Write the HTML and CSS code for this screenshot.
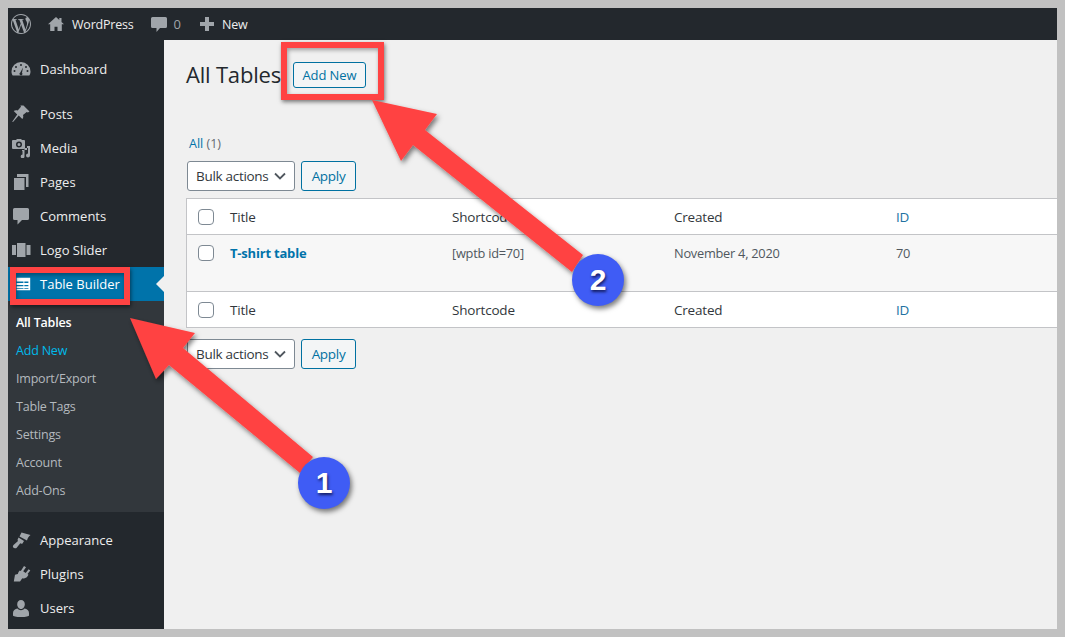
FILE: index.html
```html
<!DOCTYPE html>
<html lang="en">
<head>
<meta charset="utf-8">
<title>All Tables</title>
<link rel="stylesheet" href="styles.css">
</head>
<body>
<div class="frame">
  <header class="adminbar">
    <svg class="wp-logo" viewBox="0 0 24 24"><path fill-rule="evenodd" d="M21.469 6.825c.84 1.537 1.318 3.3 1.318 5.175 0 3.979-2.156 7.456-5.363 9.325l3.295-9.527c.615-1.54.82-2.771.82-3.864 0-.405-.026-.78-.07-1.11m-7.981.105c.647-.03 1.232-.105 1.232-.105.582-.075.514-.93-.067-.899 0 0-1.755.135-2.88.135-1.064 0-2.85-.15-2.85-.15-.585-.03-.661.855-.075.885 0 0 .54.061 1.125.09l1.68 4.605-2.37 7.08L5.354 6.9c.649-.03 1.234-.1 1.234-.1.585-.075.516-.93-.065-.896 0 0-1.746.138-2.874.138-.2 0-.438-.008-.69-.015C4.911 3.15 8.235 1.215 12 1.215c2.809 0 5.365 1.072 7.286 2.833-.046-.003-.091-.009-.141-.009-1.06 0-1.812.923-1.812 1.914 0 .89.513 1.643 1.06 2.531.411.72.89 1.643.89 2.977 0 .915-.354 1.994-.821 3.479l-1.075 3.585-3.9-11.61.001.014zM12 22.784c-1.059 0-2.081-.153-3.048-.437l3.237-9.406 3.315 9.087c.024.053.05.101.078.149-1.12.393-2.325.609-3.582.609M1.211 12c0-1.564.336-3.05.935-4.39L7.29 21.709C3.694 19.96 1.212 16.271 1.211 12M12 0C5.385 0 0 5.385 0 12s5.385 12 12 12 12-5.385 12-12S18.615 0 12 0"/></svg>
    <svg class="bar-icon bar-home" viewBox="0 0 16 16"><path d="M8 1 0 8.2h2.2V15h4.3v-4.2h3V15h4.3V8.2H16l-2.5-2.3V2h-2.2v1.9z"/></svg>
    <span class="bar-text">WordPress</span>
    <svg class="bar-icon bar-comment" viewBox="0 0 16 16"><path d="M1.5 1h13A1.5 1.5 0 0 1 16 2.5v8a1.5 1.5 0 0 1-1.500 1.500H9l-3.500 4V12h-4A1.500 1.500 0 0 1 0 10.500v-8A1.500 1.500 0 0 1 1.500 1z"/></svg>
    <span class="bar-count">0</span>
    <svg class="bar-icon bar-plus" viewBox="0 0 16 16"><path d="M6 1h4v5h5v4h-5v5H6v-5H1V6h5z"/></svg>
    <span class="bar-text bar-new">New</span>
  </header>
  <div class="body-row">
    <nav class="sidebar">
      <ul class="menu">
        <li class="item"><svg class="icon" viewBox="0 0 20 20"><path fill-rule="evenodd" d="M10 3a9.500 9.500 0 0 0-9.500 9.500c0 1.700.5 3 1.200 4h16.600c.7-1 1.200-2.300 1.200-4A9.500 9.500 0 0 0 10 3zM10 5a1 1 0 1 1 0 2 1 1 0 0 1 0-2zM5 7a1 1 0 1 1 0 2 1 1 0 0 1 0-2zM15 7a1 1 0 1 1 0 2 1 1 0 0 1 0-2zM3.500 11a1 1 0 1 1 0 2 1 1 0 0 1 0-2zM16.500 11a1 1 0 1 1 0 2 1 1 0 0 1 0-2zM12 8.500l-1 5.200a1.500 1.500 0 1 1-1.700-.3z"/></svg>Dashboard</li>
        <li class="item sep"><svg class="icon" viewBox="0 0 20 20"><path d="M12.500 1.500l6 6-1.600 1-1.200-.6-3.700 3.200c.6 1.600.2 3-.7 4L7.700 11.500 2 18l-.8-.3 5-7.200L2.700 7.100c1-.9 2.500-1.200 4-.6l3.300-3.700-.6-1.200z"/></svg>Posts</li>
        <li class="item"><svg class="icon" viewBox="0 0 20 20"><path fill-rule="evenodd" d="M2 2h3l1-1h4l1 1h2a1 1 0 0 1 1 1v7a1 1 0 0 1-1 1H2a1 1 0 0 1-1-1V3a1 1 0 0 1 1-1zM8 3.500a3 3 0 1 0 0 6 3 3 0 0 0 0-6zM8 5a1.500 1.500 0 1 1 0 3 1.500 1.500 0 0 1 0-3z"/><path d="M19 8v9.500a2 2 0 1 1-2-2V10h-3.500v8.500a1.900 1.900 0 1 1-2-2v-3.500h-.5V12h5V8z"/></svg>Media</li>
        <li class="item"><svg class="icon" viewBox="0 0 20 20"><path d="M6 2h11.500v13H15V5H6z"/><path d="M3 6h10.500v12H3z"/></svg>Pages</li>
        <li class="item"><svg class="icon" viewBox="0 0 20 20"><path d="M3.500 2h13A1.500 1.500 0 0 1 18 3.500v9a1.500 1.500 0 0 1-1.500 1.500H11l-4.500 4.500V14h-3A1.500 1.500 0 0 1 2 12.500v-9A1.500 1.500 0 0 1 3.500 2z"/></svg>Comments</li>
        <li class="item"><svg class="icon" viewBox="0 0 20 20"><path d="M6 3h8.500v14H6zM1 5h4v10H1zM15.500 5h4v10h-4z"/></svg>Logo Slider</li>
        <li class="item current"><svg class="icon" viewBox="0 0 20 20"><path fill-rule="evenodd" d="M3 3h15v14H3zM3 7.200v1.600h7.500V7.200zM11.500 7.200v1.600H16V7.200zM3 11v1.600h7.500V11zM11.500 11v1.600H16V11zM3 14.600v1h7.500v-1zM11.500 14.600v1H16v-1z"/></svg>Table Builder</li>
      </ul>
      <ul class="submenu">
        <li class="sub sub-active">All Tables</li>
        <li class="sub sub-link">Add New</li>
        <li class="sub">Import/Export</li>
        <li class="sub">Table Tags</li>
        <li class="sub">Settings</li>
        <li class="sub">Account</li>
        <li class="sub">Add-Ons</li>
      </ul>
      <ul class="menu menu-lower">
        <li class="item"><svg class="icon" viewBox="0 0 20 20"><path d="M10.500 2.500 19.500 5c-1.500 1-3 3-3.500 5.500l-7.500-4zM7.500 7.500l5.500 3.500-1.500 2.500c-.8.400-1.700.2-2.200-.2L5.500 18c-1 .8-2.700 0-3.200-.5-.5-.6-.6-1.700.2-2.500L7 11c-.4-.7-.6-1.500 0-2.300z"/></svg>Appearance</li>
        <li class="item"><svg class="icon" viewBox="0 0 20 20"><path d="M13 2l2 1.300-2.800 4 2.500 1.700 2.900-3.800 1.700 1.400L16.500 10l1 .8-1 1.500c-1 1.700-3.200 2.700-5.200 2l-2.300 3.200H2.800l1.200-6.800 2.800-.8c.3-1.400 1-2.500 2-3.400l1 .6z"/></svg>Plugins</li>
        <li class="item"><svg class="icon" viewBox="0 0 20 20"><path d="M10 2c2.300 0 3.800 1.900 3.800 4.200S12.300 11 10 11 6.200 8.500 6.200 6.200 7.700 2 10 2z"/><path d="M6.500 10.500c.9 1 2.100 1.700 3.500 1.700s2.600-.7 3.500-1.700c2.500.6 4.500 2 4.500 4.500v2.500c0 .800-3 1.500-8 1.500s-8-.7-8-1.500V15c0-2.500 2-3.900 4.500-4.500z"/></svg>Users</li>
      </ul>
    </nav>
    <main class="main">
      <div class="heading">
        <h1 class="title">All Tables</h1>
        <a class="btn add-new">Add New</a>
      </div>
      <p class="views"><a class="view-link">All</a> (1)</p>
      <div class="actions">
        <div class="select">Bulk actions<svg class="chev" viewBox="0 0 12 8"><path d="M1 1.500 6 6.500l5-5" fill="none" stroke="#50575e" stroke-width="1.800"/></svg></div>
        <a class="btn apply">Apply</a>
      </div>
      <table class="tbl">
        <colgroup><col class="c0"><col class="c1"><col class="c1"><col class="c1"><col></colgroup>
        <thead>
          <tr class="hrow"><td><span class="check"></span></td><td>Title</td><td>Shortcode</td><td>Created</td><td class="id">ID</td></tr>
        </thead>
        <tbody>
          <tr class="drow"><td><span class="check"></span></td><td><a class="name">T-shirt table</a></td><td class="small">[wptb id=70]</td><td class="small">November 4, 2020</td><td class="small">70</td></tr>
        </tbody>
        <tfoot>
          <tr class="frow"><td><span class="check"></span></td><td>Title</td><td>Shortcode</td><td>Created</td><td class="id">ID</td></tr>
        </tfoot>
      </table>
      <div class="actions actions-lower">
        <div class="select">Bulk actions<svg class="chev" viewBox="0 0 12 8"><path d="M1 1.500 6 6.500l5-5" fill="none" stroke="#50575e" stroke-width="1.800"/></svg></div>
        <a class="btn apply">Apply</a>
      </div>
    </main>
  </div>

  <div class="mark mark-add"></div>
  <div class="mark mark-tb"></div>
  <svg class="arrows" viewBox="0 0 1049 621">
    <defs><filter id="sh" x="-10%" y="-10%" width="125%" height="125%"><feDropShadow dx="2" dy="3" stdDeviation="2.500" flood-color="#000" flood-opacity=".5"/></filter></defs>
    <path filter="url(#sh)" d="M122 310 187 325 175 340 305 449 292 465 161 357 148 371z"/>
    <path filter="url(#sh)" d="M364 92 429 106 417 122 575 247 564 264 405 137 393 153z"/>
  </svg>
  <div class="badge badge-1">1</div>
  <div class="badge badge-2">2</div>
</div>
</body>
</html>
```
FILE: styles.css
```css
* { box-sizing: border-box; }
html, body { margin: 0; padding: 0; height: 100%; }
body {
  background: #c1c1c1;
  padding: 8px;
  font-family: "Open Sans", "Liberation Sans", sans-serif;
  font-size: 13px;
  color: #2c3338;
}
ul { list-style: none; margin: 0; padding: 0; }
.frame {
  position: relative;
  width: 1049px;
  height: 621px;
  overflow: hidden;
  display: flex;
  flex-direction: column;
  background: #f0f0f0;
}
.adminbar {
  height: 32px;
  flex: none;
  display: flex;
  align-items: center;
  background: #23282d;
  color: #eee;
  padding-left: 3px;
}
.wp-logo { width: 20px; height: 20px; fill: #a0a5aa; }
.bar-icon { width: 16px; height: 16px; fill: #a0a5aa; }
.bar-home { margin-left: 17px; margin-right: 8px; }
.bar-text { font-size: 12.500px; letter-spacing: -.2px; }
.bar-comment { margin-left: 17px; margin-right: 7px; }
.bar-count { color: #a0a5aa; }
.bar-plus { margin-left: 18px; margin-right: 7px; }
.body-row { flex: 1; display: flex; min-height: 0; }
.sidebar { width: 156px; flex: none; background: #23282d; color: #eee; padding-top: 12px; }
.item {
  position: relative;
  height: 34px;
  display: flex;
  align-items: center;
  padding-left: 3px;
}
.sep { margin-top: 11px; }
.icon { width: 20px; height: 20px; flex: none; margin-right: 9px; fill: #a0a5aa; }
.current { background: #0073aa; color: #fff; }
.current .icon { fill: #fff; width: 18px; margin-left: 3px; margin-right: 8px; }
.current::after {
  content: "";
  position: absolute;
  right: 0;
  top: 9px;
  border: 8px solid transparent;
  border-left-width: 0;
  border-right-color: #f0f0f0;
}
.submenu { background: #32373c; padding: 8px 0 7px; }
.sub {
  height: 28px;
  line-height: 28px;
  padding-left: 8px;
  font-size: 12.500px;
  letter-spacing: -.2px;
  color: #b4b9be;
}
.sub-active { color: #fff; font-weight: 600; }
.sub-link { color: #00b9eb; }
.menu-lower { margin-top: 11px; }
.main { flex: 1; min-width: 0; padding: 22px 0 0 22px; }
.heading { display: flex; align-items: center; height: 26px; }
.title {
  margin: 0 0 2px;
  font-size: 22px;
  font-weight: 400;
  letter-spacing: -.2px;
  color: #23282d;
  line-height: 26px;
}
.btn {
  display: flex;
  align-items: center;
  justify-content: center;
  border: 1px solid #0071a1;
  border-radius: 3px;
  background: #f3f5f6;
  color: #0071a1;
  letter-spacing: -.1px;
}
.add-new { width: 73px; height: 26px; margin-left: 12px; font-size: 13px; }
.views { margin: 46px 0 7px 3px; line-height: 20px; color: #646970; font-size: 12.500px; }
.view-link { color: #0073aa; }
.actions { display: flex; height: 30px; margin-left: 1px; margin-bottom: 7px; }
.actions-lower { margin-top: 11px; }
.select {
  width: 108px;
  display: flex;
  align-items: center;
  justify-content: space-between;
  padding: 0 8px;
  background: #fff;
  border: 1px solid #7e8993;
  border-radius: 3px;
  font-size: 13.500px;
  letter-spacing: -.3px;
  color: #32373c;
}
.chev { width: 12px; height: 8px; flex: none; }
.apply { width: 55px; margin-left: 6px; font-size: 13.500px; letter-spacing: -.3px; }
.tbl {
  width: 871px;
  table-layout: fixed;
  border-collapse: separate;
  border-spacing: 0;
  background: #fff;
  border: 1px solid #c3c4c7;
  border-right: 0;
  font-size: 13.500px;
  letter-spacing: -.2px;
  color: #32373c;
}
.tbl td { padding: 0; vertical-align: middle; }
.c0 { width: 43px; }
.c1 { width: 222px; }
.tbl td:first-child { padding-left: 11px; }
.hrow td { height: 36px; border-bottom: 1px solid #c3c4c7; }
.drow td { height: 57px; padding-top: 8px; vertical-align: top; line-height: 20px; background: #f7f7f7; border-bottom: 1px solid #c3c4c7; }
.frow td { height: 35px; }
.id { color: #2271a1; }
.check {
  display: block;
  width: 16px;
  height: 16px;
  background: #fff;
  border: 1px solid #7e8993;
  border-radius: 4px;
}
.drow .check { margin-top: 2px; }
.name { font-weight: 700; font-size: 13px; color: #0073aa; }
.small { font-size: 12.800px; letter-spacing: -.25px; color: #50575e; }
.mark { position: absolute; border: 6px solid #ff4343; box-shadow: 1px 2px 4px rgba(0,0,0,.5), inset 1px 2px 4px rgba(0,0,0,.35); }
.mark-add { left: 273px; top: 34px; width: 103px; height: 58px; }
.mark-tb { left: 2px; top: 259px; width: 120px; height: 38px; }
.arrows { position: absolute; left: 0; top: 0; width: 1049px; height: 621px; fill: #ff4343; pointer-events: none; }
.badge {
  position: absolute;
  width: 52px;
  height: 52px;
  border-radius: 50%;
  background: #3f5cf5;
  box-shadow: 2px 3px 5px rgba(0,0,0,.5);
  display: flex;
  align-items: center;
  justify-content: center;
  font-family: "Liberation Sans", sans-serif;
  font-weight: 700;
  font-size: 30px;
  color: #fff;
  text-shadow: 1px 2px 3px rgba(0,0,30,.7);
}
.badge-1 { left: 290px; top: 449px; }
.badge-2 { left: 564px; top: 246px; }
```
